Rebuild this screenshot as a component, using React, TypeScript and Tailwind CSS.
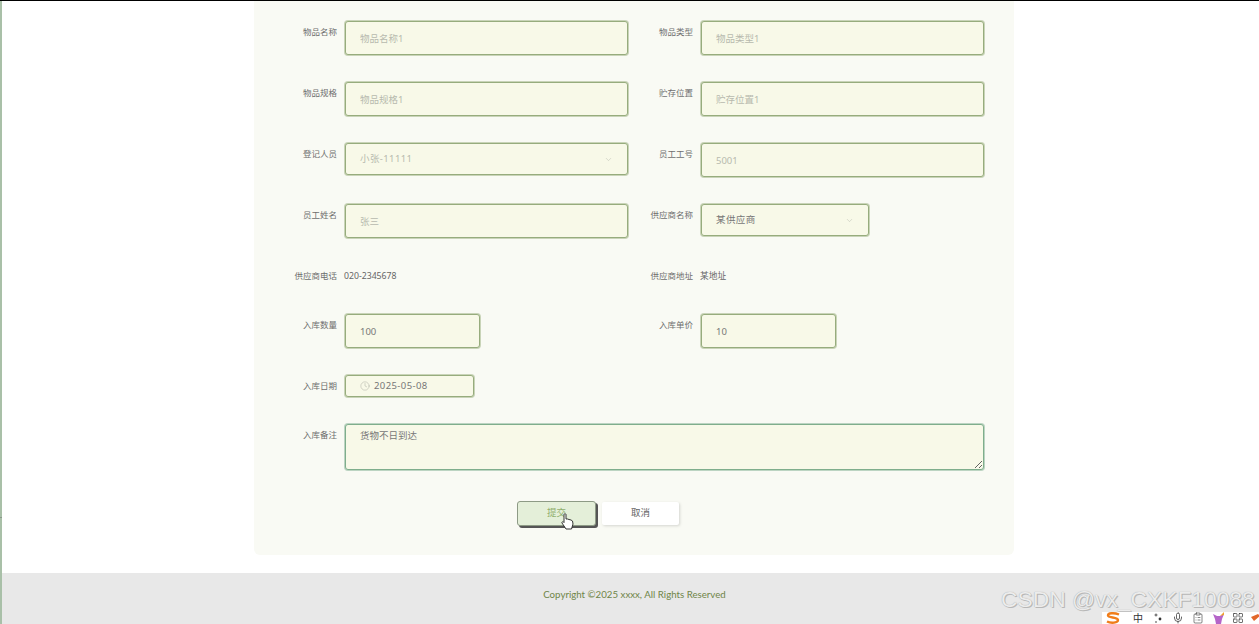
import React from 'react';
import { ChevronDown, Clock, Mic, ClipboardList, LayoutGrid } from 'lucide-react';

const font = { fontFamily: '"Noto Sans", "Noto Sans CJK SC", sans-serif' };

const Label: React.FC<{ text: string }> = ({ text }) => (
  <label className="w-[56px] shrink-0 whitespace-nowrap pr-[7px] text-right text-[8.5px] leading-[24px] text-[#6e6e6e]">
    {text}
  </label>
);

const boxCls = 'rounded-[3px] border border-[#97ac7d] bg-[#f8f9e8] shadow-[0_0_0_1px_#c9d4b8]';

const inputCls = `h-[34px] my-px mx-px shrink-0 px-[14px] text-[9.5px] text-[#777] outline-none placeholder:text-[#b7b9ae] ${boxCls}`;

const Field: React.FC<{ label: string; placeholder?: string; value?: string; w?: string; muted?: boolean }> = ({
  label,
  placeholder,
  value,
  w = 'w-[283px]',
  muted,
}) => (
  <div className="flex items-start">
    <Label text={label} />
    <input
      className={`${inputCls} ${w} ${muted ? 'text-[#b7b9ae]' : ''}`}
      placeholder={placeholder}
      defaultValue={value}
      readOnly
    />
  </div>
);

const Select: React.FC<{ label: string; value: string; w: string; muted?: boolean }> = ({ label, value, w, muted }) => (
  <div className="flex items-start">
    <Label text={label} />
    <div
      className={`m-px flex h-[32px] ${w} shrink-0 items-center justify-between px-[14px] text-[9.5px] ${boxCls} ${
        muted ? 'text-[#b7b9ae]' : 'text-[#777]'
      }`}
    >
      <span className="tracking-[0.4px]">{value}</span>
      <ChevronDown size={9} strokeWidth={1} className="text-[#a5a79c]" />
    </div>
  </div>
);

const TextRow: React.FC<{ label: string; value: string }> = ({ label, value }) => (
  <div className="flex items-start">
    <Label text={label} />
    <span className="text-[8.7px] leading-[24px] text-[#666]">{value}</span>
  </div>
);

const ImeCell: React.FC<{ children: React.ReactNode }> = ({ children }) => (
  <div className="flex h-[12px] w-[20px] shrink-0 justify-center">{children}</div>
);

const Ime: React.FC = () => (
  <div className="absolute bottom-0 right-0 flex h-[12px] w-[157px] items-start overflow-hidden bg-white pl-[1px] text-[#333]">
    <ImeCell>
      <svg width="16" height="12" viewBox="0 0 16 12">
        <path d="M14 2.5 C9 0.5 3 1 3 3.5 C3 6 13 5 13 8 C13 11 6 11.5 2 9.5" fill="none" stroke="#f07d1a" strokeWidth="2.4" />
      </svg>
    </ImeCell>
    <div className="w-[5px] shrink-0" />
    <ImeCell>
      <span className="text-[10px] leading-[12px]">中</span>
    </ImeCell>
    <ImeCell>
      <svg width="11" height="12" viewBox="0 0 11 12">
        <circle cx="3" cy="3" r="1" fill="none" stroke="#333" strokeWidth="0.8" />
        <circle cx="7" cy="7" r="1.4" fill="#333" />
        <circle cx="3" cy="10" r="0.8" fill="#333" />
      </svg>
    </ImeCell>
    <ImeCell>
      <Mic size={12} strokeWidth={1.5} />
    </ImeCell>
    <ImeCell>
      <ClipboardList size={12} strokeWidth={1.2} />
    </ImeCell>
    <ImeCell>
      <svg width="13" height="12" viewBox="0 0 13 12">
        <path d="M1 2 L5 4 L8 4 L12 2 L10 7 L9 12 L4 12 L3 7 Z" fill="#b565c9" />
        <path d="M8 4 L12 0 L12 3 Z" fill="#f0a030" />
      </svg>
    </ImeCell>
    <ImeCell>
      <LayoutGrid size={12} strokeWidth={1.4} />
    </ImeCell>
    <svg className="ml-[2px] shrink-0" width="10" height="12" viewBox="0 0 10 12">
      <path d="M1 5 L8 2 L10 4 L4 9 Z" fill="#e2662a" />
    </svg>
  </div>
);

export default function App() {
  return (
    <div className="relative h-[624px] w-full overflow-hidden bg-white" style={font}>
      <div className="h-px bg-black" />
      <div className="flex h-[623px] flex-col border-l-2 border-[#a9c0a8]">
        <main className="ml-[252px] h-[554px] w-[760px] shrink-0 rounded-b-[6px] bg-[#f9faf4] pt-[19px]">
          <div className="grid grid-cols-[356px_356px] gap-y-[25px] pl-[34px]">
            <Field label="物品名称" placeholder="物品名称1" />
            <Field label="物品类型" placeholder="物品类型1" />
            <Field label="物品规格" placeholder="物品规格1" />
            <Field label="贮存位置" placeholder="贮存位置1" />
            <Select label="登记人员" value="小张-11111" w="w-[283px]" muted />
            <Field label="员工工号" value="5001" muted />
            <Field label="员工姓名" placeholder="张三" />
            <Select label="供应商名称" value="某供应商" w="w-[168px]" />
            <TextRow label="供应商电话" value="020-2345678" />
            <TextRow label="供应商地址" value="某地址" />
            <Field label="入库数量" value="100" w="w-[135px]" />
            <Field label="入库单价" value="10" w="w-[135px]" />
            <div className="col-span-2 flex items-start">
              <Label text="入库日期" />
              <div className={`m-px flex h-[22px] w-[129px] shrink-0 items-center gap-[4px] pl-[14px] text-[9.5px] tracking-[0.4px] text-[#777] ${boxCls}`}>
                <Clock size={10} strokeWidth={1.1} className="text-[#a5a79c]" />
                <span>2025-05-08</span>
              </div>
            </div>
            <div className="col-span-2 flex items-start">
              <Label text="入库备注" />
              <textarea
                className="m-px h-[46px] w-[639px] shrink-0 rounded-[3px] border border-[#7fae8c] bg-[#f8f9e8] px-[14px] py-[4px] text-[9.5px] text-[#777] shadow-[0_0_0_1px_#bcd4c2] outline-none"
                defaultValue="货物不日到达"
                readOnly
              />
            </div>
          </div>
          <div className="mt-[30px] flex items-start gap-[6px] pl-[263px]">
            <button className="h-[25px] w-[79px] rounded-[3px] border border-[#8d9a85] bg-[#e4efd9] text-[9.5px] text-[#8fae6c] shadow-[2px_2px_0_#555]">
              提交
            </button>
            <button className="mt-px h-[23px] w-[77px] rounded-[2px] bg-white text-[9.5px] text-[#666] shadow-[1px_1px_3px_rgba(0,0,0,0.15)]">
              取消
            </button>
          </div>
        </main>
        <footer
          className="mt-[18px] flex flex-1 items-start justify-center bg-[#e8e8e8] pl-[8px] pt-[13px] text-[9.7px] leading-[16px] text-[#6f8547]"
          style={{ fontFamily: 'Lato, "Noto Sans", sans-serif' }}
        >
          Copyright ©2025 xxxx, All Rights Reserved
        </footer>
      </div>

      <div className="absolute left-0 top-[517px] h-px w-[2px] bg-[#8a9a8a]" />

      {/* mouse cursor over the submit button */}
      <svg className="absolute left-[561px] top-[513px]" width="13" height="17" viewBox="0 0 13 17">
        <path
          d="M3 1.5 C3 0.5 5 0.5 5 1.5 L5 6 L6.5 6 L8 6.5 L10 7 L11.5 8 L12 11 L10.5 16 L5 16 L1 10 C0.5 9 2 8 3 9.5 Z"
          fill="#fff"
          stroke="#222"
          strokeWidth="0.9"
        />
      </svg>

      {/* watermark */}
      <div
        className="absolute left-[1001px] top-[587px] whitespace-nowrap text-[22.8px] leading-[24px] text-[#ececec]"
        style={{ fontFamily: '"Liberation Sans", sans-serif', textShadow: '0 0 1px #999, 1px 1px 0 #bbb' }}
      >
        CSDN @vx_CXKF10088
      </div>
      <Ime />
    </div>
  );
}
